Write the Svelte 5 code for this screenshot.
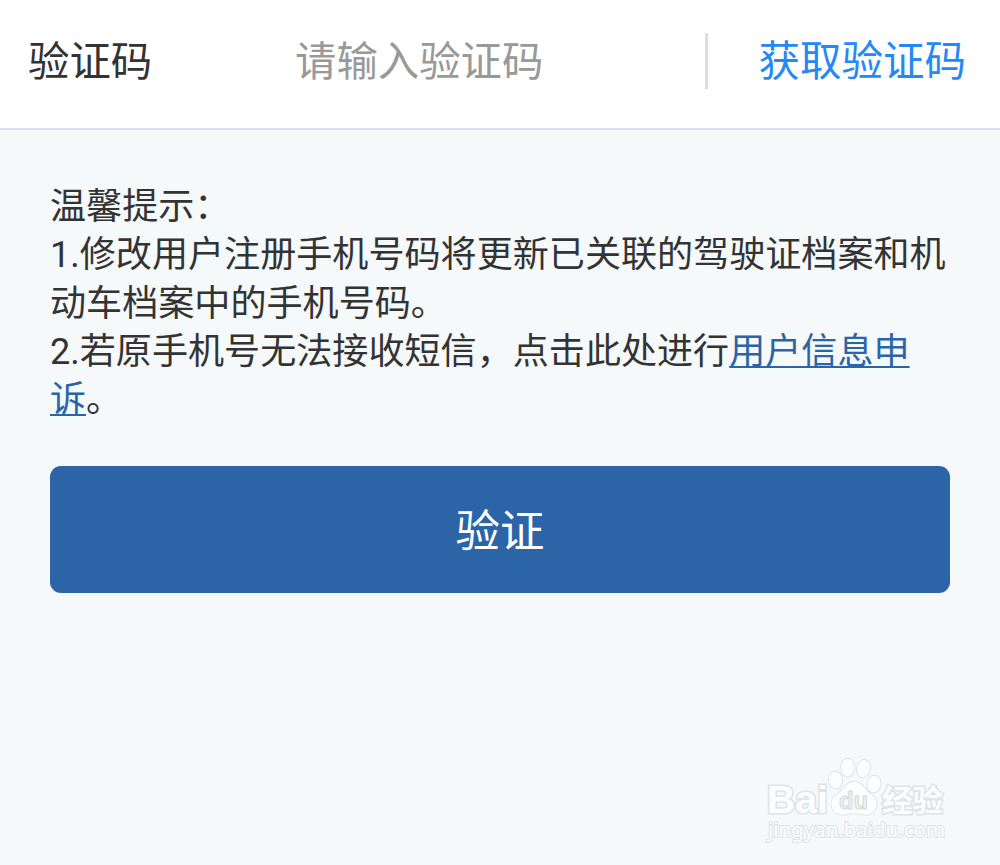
<script lang="ts">
  let code = '';
</script>

<div class="page">
  <div class="code-row">
    <label for="code">验证码</label>
    <input id="code" type="text" placeholder="请输入验证码" bind:value={code} />
    <button class="get-code" type="button">获取验证码</button>
  </div>

  <div class="content">
    <div class="tips">
      <p>温馨提示：</p>
      <p>1.修改用户注册手机号码将更新已关联的驾驶证档案和机动车档案中的手机号码。</p>
      <p>2.若原手机号无法接收短信，点击此处进行<a href="#appeal">用户信息申诉</a>。</p>
    </div>
    <button class="submit" type="button">验证</button>
  </div>

  <svg class="watermark" width="200" height="100" viewBox="0 0 200 100">
    <g class="mark">
      <text class="latin" x="7" y="67.500" font-size="38" textLength="61" lengthAdjust="spacingAndGlyphs">Bai</text>
      <ellipse cx="75.500" cy="35" rx="6.700" ry="8.500" transform="rotate(-8 75.500 35)" />
      <ellipse cx="87.800" cy="22.500" rx="6.500" ry="9" />
      <ellipse cx="103.500" cy="23.500" rx="6.500" ry="8.700" transform="rotate(12 103.500 23.500)" />
      <ellipse cx="114" cy="39" rx="6.500" ry="8.500" transform="rotate(10 114 39)" />
      <path d="M94 37 C86 37 84 44 79 48 C73 52 70 56 72 62 C74 70 81 70 87 69 C92 68 96 68 101 69 C108 70 114 70 116 62 C118 56 115 52 109 48 C104 44 102 37 94 37 Z" />
      <text class="cjk" x="122" y="66" font-size="30" textLength="61" lengthAdjust="spacingAndGlyphs">经验</text>
      <text class="url" x="8" y="92" font-size="19.500" textLength="177" lengthAdjust="spacingAndGlyphs">jingyan.baidu.com</text>
    </g>
    <text class="du" x="79" y="64" font-size="24" textLength="29" lengthAdjust="spacingAndGlyphs">du</text>
  </svg>
</div>

<style>
  :global(body) {
    background-color: #f5f9fa;
  }

  .page {
    position: relative;
    box-sizing: border-box;
    height: 865px;
    overflow: hidden;
    background-color: #f5f9fa;
    color: #333333;
    font-family: Roboto, 'Noto Sans CJK SC', sans-serif;
  }

  .code-row {
    display: flex;
    align-items: center;
    box-sizing: border-box;
    height: 130px;
    padding: 0 34px 6px 28px;
    border-bottom: 2px solid #d2e1ef;
    background-color: #ffffff;
    font-size: 41.4px;
  }

  label {
    flex: none;
    width: 267px;
    height: 56px;
    line-height: 58px;
  }

  input {
    flex: 1;
    min-width: 0;
    height: 56px;
    padding: 2px 0 0;
    border: none;
    outline: none;
    background: transparent;
    color: #333333;
    font: inherit;
  }

  input::placeholder {
    color: #999999;
    opacity: 1;
  }

  .get-code {
    box-sizing: border-box;
    flex: none;
    height: 56px;
    padding: 1px 0 0 50px;
    border: none;
    border-left: 3px solid #dddddd;
    background: none;
    color: #2489f6;
    font: inherit;
    font-size: 41.5px;
    line-height: 55px;
    white-space: nowrap;
  }

  .content {
    padding: 53px 50px 0;
  }

  .tips {
    font-size: 36.1px;
    line-height: 48.25px;
  }

  p {
    margin: 0;
  }

  a {
    color: #2b65a8;
    text-decoration: underline;
    text-decoration-thickness: 2px;
    text-decoration-skip-ink: none;
    text-underline-offset: 2px;
  }

  .submit {
    display: block;
    width: 100%;
    height: 127px;
    margin-top: 41.75px;
    padding: 0 0 5px;
    border: none;
    border-radius: 11px;
    background-color: #2b65a8;
    color: #ffffff;
    font-family: inherit;
    font-size: 44.4px;
  }

  .watermark {
    position: absolute;
    left: 760px;
    top: 745px;
  }

  .mark {
    fill: #fcfdfe;
    stroke: #dfe3e6;
    stroke-width: 2px;
    paint-order: stroke;
  }

  .latin,
  .du {
    font-family: 'Liberation Sans', sans-serif;
    font-weight: bold;
  }

  .latin {
    stroke-width: 3px;
  }

  .du {
    fill: #eceff0;
    stroke: #d5d9db;
    stroke-width: 1px;
  }

  .cjk {
    font-family: 'Noto Sans CJK SC', sans-serif;
    font-weight: bold;
    stroke-width: 3px;
  }

  .url {
    font-family: 'Noto Sans', sans-serif;
    font-weight: 400;
  }
</style>
